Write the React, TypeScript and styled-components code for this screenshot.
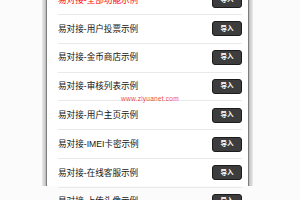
import { FC } from 'react'
import styled, { createGlobalStyle } from 'styled-components'

const GlobalStyle = createGlobalStyle`
  html, body {
    margin: 0;
    padding: 0;
    background: #fbfbfb;
  }
  body {
    font-family: "Liberation Sans", "Noto Sans CJK SC", sans-serif;
  }
`

type Demo = {
  title: string
  highlight?: boolean
}

const DEMOS: Demo[] = [
  { title: '易对接-全部功能示例', highlight: true },
  { title: '易对接-用户投票示例' },
  { title: '易对接-金币商店示例' },
  { title: '易对接-审核列表示例' },
  { title: '易对接-用户主页示例' },
  { title: '易对接-IMEI卡密示例' },
  { title: '易对接-在线客服示例' },
  { title: '易对接-上传头像示例' },
]

const App: FC = () => (
  <>
    <GlobalStyle />
    <Page>
      <Frame>
        <Screen>
          <List>
            {DEMOS.map((demo) => (
              <Row key={demo.title}>
                <Title $highlight={demo.highlight}>{demo.title}</Title>
                <ImportButton type="button">导入</ImportButton>
              </Row>
            ))}
          </List>
        </Screen>
      </Frame>
      <Watermark>www.ziyuanet.com</Watermark>
    </Page>
  </>
)

const Page = styled.div`
  position: relative;
  width: 300px;
  height: 200px;
  overflow: hidden;
`

// phone edge: light shade outside, dark line on the inner side
const Frame = styled.div`
  margin-left: 42px;
  width: 211px;
  height: 100%;
  padding: 0 5px;
  box-sizing: border-box;
  background: linear-gradient(
    to right,
    #ececec 0,
    #c9c9c9 3px,
    #b8b8b8 4px,
    #7d7d7d 4px,
    #7d7d7d 5px,
    #ffffff 5px,
    #ffffff calc(100% - 5px),
    #7d7d7d calc(100% - 5px),
    #7d7d7d calc(100% - 4px),
    #b8b8b8 calc(100% - 4px),
    #c9c9c9 calc(100% - 3px),
    #ececec 100%
  );
`

const Screen = styled.div`
  height: 100%;
  background: #fff;
  padding: 0 6px 0 11px;
`

const List = styled.div`
  margin-top: -13.8px;
`

const Row = styled.div`
  height: 28.8px;
  box-sizing: border-box;
  display: flex;
  align-items: center;
  justify-content: space-between;
  border-bottom: 1px solid #e9e9e9;
`

const Title = styled.span<{ $highlight?: boolean }>`
  font-size: 8.6px;
  line-height: 1;
  color: ${({ $highlight }) => ($highlight ? '#ff0a0a' : '#141414')};
`

const ImportButton = styled.button`
  width: 30px;
  height: 15px;
  padding: 0;
  margin: 0;
  border: 1px solid #1c1c1c;
  border-radius: 3px;
  background: #3d3d3d;
  color: #fff;
  font-family: "Liberation Sans", "Noto Sans CJK SC", sans-serif;
  font-size: 6.5px;
  font-weight: 700;
  line-height: 1;
  display: flex;
  align-items: center;
  justify-content: center;
`

const Watermark = styled.div`
  position: absolute;
  top: 95px;
  left: 0;
  width: 300px;
  text-align: center;
  font-size: 6.6px;
  letter-spacing: 0.2px;
  color: rgba(235, 30, 30, 0.85);
`

export default App
